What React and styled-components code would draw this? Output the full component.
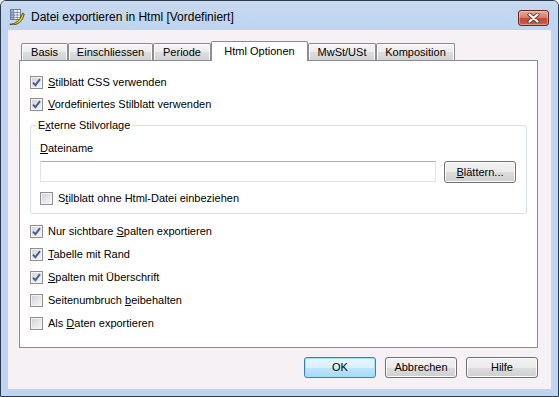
import React from 'react';
import styled, { createGlobalStyle } from 'styled-components';

const Global = createGlobalStyle`
  html, body { margin: 0; padding: 0; background: #ffffff; }
  body {
    width: 559px; height: 397px; overflow: hidden;
    font-family: "Liberation Sans", Arial, sans-serif;
    font-size: 11px; color: #000;
  }
  *, *::before, *::after { box-sizing: border-box; }
`;

const Window = styled.div`
  width: 559px;
  height: 397px;
  border: 1px solid #2b3c4f;
  border-radius: 6px 6px 0 0;
  background: #bfd5ef;
  display: flex;
  flex-direction: column;
  overflow: hidden;
`;

const TitleBar = styled.div`
  height: 29px;
  flex: none;
  display: flex;
  align-items: center;
  padding: 3px 0 0 8px;
  background: linear-gradient(to bottom, #c9daf0 0%, #c2d6ef 50%, #bfd5ef 100%);
`;

const TitleIcon = styled.svg`
  width: 16px;
  height: 16px;
  flex: none;
  margin-right: 6px;
`;

const TitleText = styled.span`
  font-family: "Liberation Sans", Arial, sans-serif;
  font-size: 12px;
  color: #000;
  white-space: nowrap;
`;

const CloseButton = styled.div`
  margin-left: auto;
  margin-right: 9px;
  align-self: flex-start;
  margin-top: 6px;
  width: 31px;
  height: 16px;
  border: 1px solid #5e2a24;
  border-radius: 3px;
  background: linear-gradient(to bottom, #e9a99a 0%, #d7806f 45%, #c04a36 55%, #c9604a 100%);
  box-shadow: inset 0 0 0 1px rgba(255, 220, 210, 0.45);
  display: flex;
  align-items: center;
  justify-content: center;
`;

const Frame = styled.div`
  flex: 1;
  display: flex;
  padding: 0 7px 7px;
`;

const Client = styled.div`
  flex: 1;
  background: #f5f1f5;
  display: flex;
  flex-direction: column;
  padding: 11px 13px 11px 11px;
`;

const TabStrip = styled.div`
  height: 19px;
  flex: none;
  display: flex;
  align-items: flex-end;
  padding-left: 2px;
  position: relative;
  z-index: 1;
`;

const Tab = styled.div`
  width: ${p => p.$w}px;
  height: ${p => (p.$active ? 20 : 17)}px;
  margin-bottom: ${p => (p.$active ? -1 : 0)}px;
  border: 1px solid #898c95;
  border-bottom: none;
  border-radius: 2px 2px 0 0;
  background: ${p =>
    p.$active
      ? '#ffffff'
      : 'linear-gradient(to bottom, #f4f4f4 0%, #ececec 50%, #dedede 52%, #d2d2d2 100%)'};
  box-shadow: ${p => (p.$active ? 'none' : 'inset 1px 1px 0 #fcfcfc, inset -1px 0 0 #fcfcfc')};
  display: flex;
  align-items: center;
  justify-content: center;
  padding-bottom: ${p => (p.$active ? 2 : 0)}px;
  white-space: nowrap;
`;

const Panel = styled.div`
  flex: 1;
  border: 1px solid #898c95;
  background: #ffffff;
  display: flex;
  flex-direction: column;
  padding: 10px 10px 0 10px;
`;

const CheckRow = styled.label`
  height: ${p => p.$h || 22}px;
  margin-top: ${p => p.$mt || 0}px;
  flex: none;
  display: flex;
  align-items: center;
  line-height: 13px;
  white-space: nowrap;
`;

const Box = styled.span`
  width: 13px;
  height: 13px;
  flex: none;
  margin-right: 5px;
  border: 1px solid #8f8f8f;
  background: linear-gradient(135deg, #cdd0d5 0%, #e4e5e8 50%, #f7f7f7 100%);
  box-shadow: inset 0 0 0 1px #f4f4f4;
  display: flex;
  align-items: center;
  justify-content: center;
`;

const Key = styled.u`
  text-decoration: underline;
  text-underline-offset: 1px;
`;

const Group = styled.fieldset`
  margin: 4px 0 0 0;
  min-width: 0;
  border: 1px solid #d5dfe5;
  border-radius: 3px;
  padding: 10px 10px 5px 9px;
  display: flex;
  flex-direction: column;
`;

const Legend = styled.legend`
  padding: 0 2px;
  margin-left: -4px;
  line-height: 13px;
  font-size: 11px;
`;

const FieldLabel = styled.div`
  line-height: 13px;
  height: 13px;
`;

const InputRow = styled.div`
  margin-top: 6px;
  display: flex;
  align-items: flex-start;
  gap: 8px;
`;

const TextInput = styled.div`
  flex: 1;
  height: 21px;
  background: #fff;
  border: 1px solid #dfe3e8;
  border-top-color: #abadb3;
`;

const Button = styled.div`
  width: 72px;
  height: ${p => p.$h || 21}px;
  flex: none;
  border: 1px solid ${p => (p.$primary ? '#3c7fb1' : '#707070')};
  border-radius: 3px;
  background: ${p =>
    p.$primary
      ? 'linear-gradient(to bottom, #eaf6fd 0%, #d9f0fc 50%, #bee6fd 51%, #a7d9f5 100%)'
      : 'linear-gradient(to bottom, #f2f2f2 0%, #ebebeb 50%, #dddddd 51%, #cfcfcf 100%)'};
  box-shadow: inset 0 0 0 1px ${p => (p.$primary ? '#9ce2fb' : '#fcfcfc')};
  display: flex;
  align-items: center;
  justify-content: center;
  line-height: 13px;
  white-space: nowrap;
`;

const ButtonBar = styled.div`
  margin-top: 9px;
  flex: none;
  display: flex;
  justify-content: flex-end;
  gap: 9px;
`;

const Check = ({ checked }) => (
  <Box>
    {checked && (
      <svg width="9" height="9" viewBox="0 0 9 9">
        <path d="M1 4.6 L3.4 7.2 L8 1.2" fill="none" stroke="#485c92" strokeWidth="1.9" strokeLinejoin="miter" />
      </svg>
    )}
  </Box>
);

const tabs = [
  { label: 'Basis', w: 47 },
  { label: 'Einschliessen', w: 85 },
  { label: 'Periode', w: 58 },
  { label: 'Html Optionen', w: 97, active: true },
  { label: 'MwSt/USt', w: 68 },
  { label: 'Komposition', w: 79 },
];

export default function App() {
  return (
    <>
      <Global />
      <Window>
        <TitleBar>
          <TitleIcon viewBox="0 0 16 16">
            <rect x="1.5" y="0.5" width="10" height="10" fill="#ffffff" stroke="#6f7f99" />
            <rect x="2" y="1" width="3" height="9" fill="#8fb0d8" />
            <path d="M1.5 3.5 H11.5 M1.5 6 H11.5 M1.5 8.5 H11.5 M5 0.5 V10.5 M8.2 0.5 V10.5" stroke="#6f7f99" strokeWidth="0.8" />
            <path d="M0.8 15.2 C5.5 15.4 11 12 13.6 4.2 L15.2 5 C13.8 12.4 8.5 16.2 2.4 15.9 Z" fill="#f4dc00" stroke="#2d2a00" strokeWidth="0.8" />
          </TitleIcon>
          <TitleText>Datei exportieren in Html [Vordefiniert]</TitleText>
          <CloseButton>
            <svg width="13" height="10" viewBox="0 0 13 10">
              <path d="M2.5 1.5 L10.5 8.5 M10.5 1.5 L2.5 8.5" stroke="#5a3a36" strokeWidth="4" strokeLinecap="round" />
              <path d="M2.5 1.5 L10.5 8.5 M10.5 1.5 L2.5 8.5" stroke="#ffffff" strokeWidth="2.2" strokeLinecap="round" />
            </svg>
          </CloseButton>
        </TitleBar>
        <Frame>
          <Client>
            <TabStrip>
              {tabs.map(t => (
                <Tab key={t.label} $w={t.w} $active={t.active}>{t.label}</Tab>
              ))}
            </TabStrip>
            <Panel>
              <CheckRow><Check checked /><span><Key>S</Key>tilblatt CSS verwenden</span></CheckRow>
              <CheckRow><Check checked /><span><Key>V</Key>ordefiniertes Stilblatt verwenden</span></CheckRow>
              <Group>
                <Legend>E<Key>x</Key>terne Stilvorlage</Legend>
                <FieldLabel><Key>D</Key>ateiname</FieldLabel>
                <InputRow>
                  <TextInput />
                  <Button $h={22}><span><Key>B</Key>lättern...</span></Button>
                </InputRow>
                <CheckRow $h={20} $mt={5}><Check /><span>S<Key>t</Key>ilblatt ohne Html-Datei einbeziehen</span></CheckRow>
              </Group>
              <CheckRow $h={23} $mt={6}><Check checked /><span>Nur sichtbare <Key>S</Key>palten exportieren</span></CheckRow>
              <CheckRow $h={23}><Check checked /><span><Key>T</Key>abelle mit Rand</span></CheckRow>
              <CheckRow $h={23}><Check checked /><span><Key>S</Key>palten mit Überschrift</span></CheckRow>
              <CheckRow $h={23}><Check /><span>Seitenumbruch <Key>b</Key>eibehalten</span></CheckRow>
              <CheckRow $h={23}><Check /><span>Als <Key>D</Key>aten exportieren</span></CheckRow>
            </Panel>
            <ButtonBar>
              <Button $primary>OK</Button>
              <Button>Abbrechen</Button>
              <Button>Hilfe</Button>
            </ButtonBar>
          </Client>
        </Frame>
      </Window>
    </>
  );
}
